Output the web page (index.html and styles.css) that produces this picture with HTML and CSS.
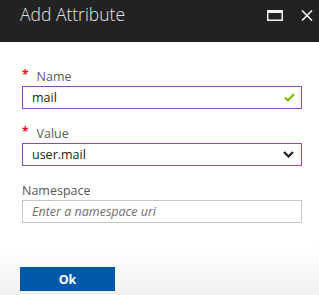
FILE: index.html
```html
<!DOCTYPE html>
<html lang="en">
<head>
  <meta charset="UTF-8" />
  <meta name="viewport" content="width=device-width, initial-scale=1.0" />
  <title>Add Attribute</title>
  <link rel="stylesheet" href="styles.css">
</head>

<body>
  <!-- Blade Header -->
  <div class="blade-header">
    <div class="blade-title">Add Attribute</div>
    <div class="blade-actions">
      <button class="icon-button" title="Maximize">
        <svg width="16" height="11" viewBox="0 0 16 11">
          <rect x="0.75" y="1.5" width="14.5" height="8.75" fill="none" stroke="#f2f2f2" stroke-width="1.5" />
          <rect x="0" y="0" width="16" height="3" fill="#f2f2f2" />
        </svg>
      </button>
      <button class="icon-button" title="Close">
        <svg width="12" height="11" viewBox="0 0 12 11">
          <path d="M1 0.5 L11 10.5 M11 0.5 L1 10.5" stroke="#f2f2f2" stroke-width="1.6" fill="none" />
        </svg>
      </button>
    </div>
  </div>

  <!-- Form -->
  <div class="blade-content">
    <div class="field">
      <label class="field-label required" for="name">Name</label>
      <div class="input-box valid">
        <input type="text" id="name" value="mail" />
        <svg class="check" width="11" height="9" viewBox="0 0 11 9">
          <path d="M1 4.5 L4 7.5 L10 1" stroke="#7fba00" stroke-width="2" fill="none" />
        </svg>
      </div>
    </div>

    <div class="field">
      <label class="field-label required" for="value">Value</label>
      <div class="input-box valid">
        <div class="select-text" id="value">user.mail</div>
        <svg class="chevron" width="11" height="7" viewBox="0 0 11 7">
          <path d="M1 1 L5.5 5.5 L10 1" stroke="#222" stroke-width="2.2" fill="none" />
        </svg>
      </div>
    </div>

    <div class="field">
      <label class="field-label" for="namespace">Namespace</label>
      <div class="input-box">
        <input type="text" id="namespace" placeholder="Enter a namespace uri" />
      </div>
    </div>
  </div>

  <!-- Footer -->
  <div class="blade-footer">
    <button class="ok-button">Ok</button>
  </div>
</body>
</html>
```

FILE: styles.css
```css
body {
  margin: 0;
  background-color: #fff;
  font-family: 'Open Sans', 'Noto Sans', sans-serif;
}

/* Header */
.blade-header {
  display: flex;
  justify-content: space-between;
  align-items: flex-start;
  height: 42px;
  box-sizing: border-box;
  padding: 3px 6px 0 20px;
  background-color: #222222;
}

.blade-title {
  font-size: 17.5px;
  font-weight: 300;
  line-height: 22px;
  color: #e6e6e6;
}

.blade-actions {
  display: flex;
  align-items: center;
  gap: 18px;
  padding-top: 7px;
}

.icon-button {
  display: flex;
  padding: 0;
  background: none;
  border: none;
  cursor: pointer;
}

/* Content */
.blade-content {
  padding: 27px 17px 0 22px;
}

.field {
  margin-bottom: 17px;
}

.field-label {
  display: block;
  font-size: 12.5px;
  line-height: 16px;
  color: #595959;
  margin-bottom: 1px;
}

.field-label.required::before {
  content: "*";
  display: inline-block;
  color: #e81123;
  font-size: 12px;
  font-weight: bold;
  line-height: 10px;
  margin-right: 8px;
  vertical-align: 2px;
}

.input-box {
  display: flex;
  align-items: center;
  height: 23px;
  box-sizing: border-box;
  border: 1px solid #c8c8c8;
  padding: 0 6px 0 9px;
}

.input-box.valid {
  border-color: #9146b4;
}

.input-box input,
.select-text {
  flex-grow: 1;
  min-width: 0;
  border: none;
  outline: none;
  padding: 0;
  font-family: inherit;
  font-size: 12.5px;
  color: #222;
  background: none;
}

.input-box input::placeholder {
  font-style: italic;
  color: #6e6e6e;
}

.chevron {
  margin-right: 1px;
}

/* Footer */
.blade-footer {
  margin-top: 22px;
  padding: 22px 20px 4px;
  background: linear-gradient(#ffffff, #f1f1f1);
  border-bottom: 1px solid #dcdcdc;
}

.ok-button {
  display: block;
  width: 95px;
  height: 24px;
  background-color: #0058a8;
  color: #fff;
  border: none;
  font-family: inherit;
  font-size: 12.5px;
  font-weight: bold;
  cursor: pointer;
}
```
